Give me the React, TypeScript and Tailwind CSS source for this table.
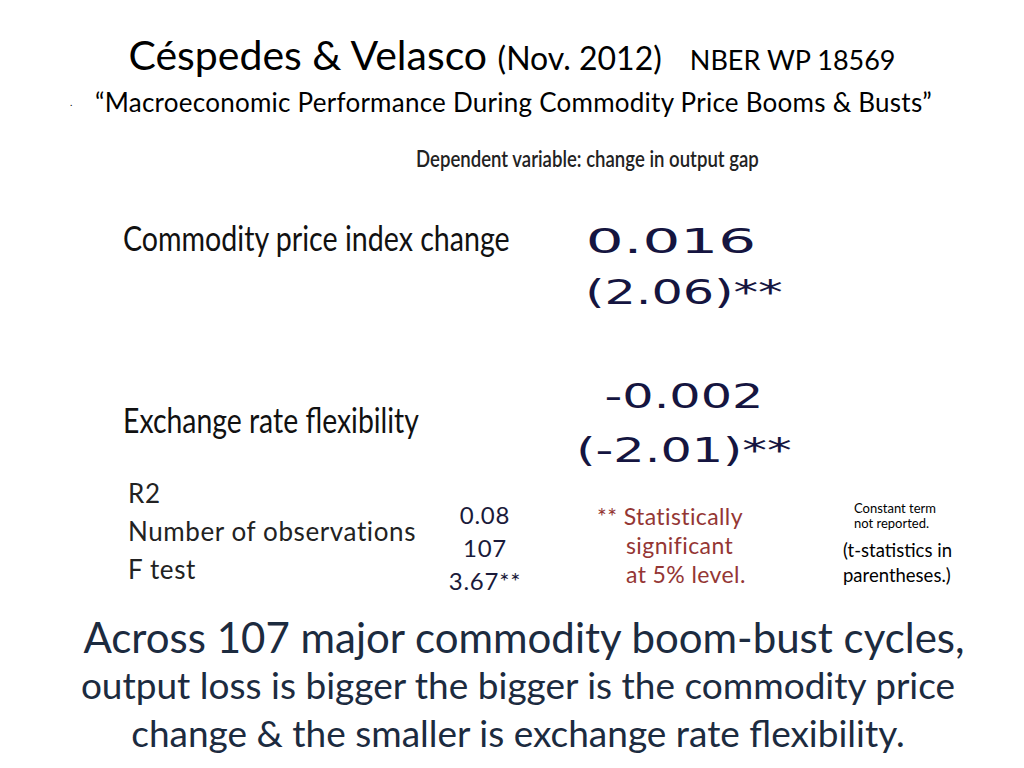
export default function App() {
  return (
    <div className="flex h-[768px] w-[1024px] flex-col overflow-hidden bg-white font-['Lato',sans-serif] text-black">
      {/* title */}
      <div className="mt-[33px] h-[49px] text-center text-[41px] leading-[44px]">
        <span>Céspedes &amp; Velasco </span>
        <span className="text-[32px]">(Nov. 2012)</span>
        <span className="ml-[28px] text-[27px]">NBER WP 18569</span>
      </div>
      <div className="mt-[5px] flex h-[30px] items-center pl-[70px] text-[26px] leading-[30px] tracking-[0.25px]">
        <span className="w-[25px] text-[10px]">.</span>
        <span className="whitespace-nowrap">“Macroeconomic Performance During Commodity Price Booms &amp; Busts”</span>
      </div>

      <div className="mt-[29px] h-[26px] pl-[416px] text-[22px] font-semibold leading-[26px] text-[#222]">
        <span className="inline-block origin-left scale-x-[0.845] whitespace-nowrap">
          Dependent variable: change in output gap
        </span>
      </div>

      {/* coefficients */}
      <div className="mt-[44px] flex items-start">
        <div className="mt-[1px] w-[584px] pl-[123px] text-[35px] leading-[40px] text-[#111]">
          <span className="inline-block origin-left scale-x-[0.817] whitespace-nowrap">
            Commodity price index change
          </span>
        </div>
        <div className="w-[200px] text-center font-['DejaVu_Sans',sans-serif] text-[34px] leading-[51px] text-[#151540]">
          <div className="scale-x-[1.75] pr-[15px]">0.016</div>
          <div className="scale-x-[1.45]">(2.06)**</div>
        </div>
      </div>

      <div className="mt-[51px] flex items-start">
        <div className="mt-[30px] w-[584px] pl-[123px] text-[35px] leading-[40px] text-[#111]">
          <span className="inline-block origin-left scale-x-[0.811] whitespace-nowrap">
            Exchange rate flexibility
          </span>
        </div>
        <div className="w-[200px] text-center font-['DejaVu_Sans',sans-serif] text-[34px] leading-[54px] text-[#151540]">
          <div className="scale-x-[1.45]">-0.002</div>
          <div className="scale-x-[1.45]">(-2.01)**</div>
        </div>
      </div>

      {/* fit statistics and notes */}
      <div className="flex items-start">
        <div className="flex w-[435px] flex-col gap-[6px] pl-[128px] text-[26px] leading-[32px] tracking-[0.6px] text-[#222]">
          <div>R2</div>
          <div className="whitespace-nowrap">Number of observations</div>
          <div>F test</div>
        </div>
        <div className="mt-[21px] w-[100px] text-center text-[24px] leading-[33px] tracking-[0.8px] text-[#1a1a3a]">
          <div>0.08</div>
          <div>107</div>
          <div>3.67**</div>
        </div>
        <div className="mt-[25px] w-[308px] pl-[62px] text-[23px] leading-[29px] tracking-[0.4px] text-[#943634]">
          <div>** Statistically</div>
          <div className="pl-[29px]">significant</div>
          <div className="pl-[29px]">at 5% level.</div>
        </div>
        <div className="mt-[24px] text-black">
          <div className="pl-[11px] text-[13px] leading-[15px]">
            <div>Constant term</div>
            <div>not reported.</div>
          </div>
          <div className="mt-[7px] text-[18.5px] leading-[25px]">
            <div>(t-statistics in</div>
            <div>parentheses.)</div>
          </div>
        </div>
      </div>

      {/* conclusion */}
      <div className="mt-[16px] pl-[12px] text-center text-[#1c2b3f]">
        <div className="pl-[12px] text-[42px] leading-[48px]">Across 107 major commodity boom-bust cycles,</div>
        <div className="text-[37px] leading-[48px]">output loss is bigger the bigger is the commodity price</div>
        <div className="text-[37px] leading-[48px]">change &amp; the smaller is exchange rate flexibility.</div>
      </div>
    </div>
  )
}
